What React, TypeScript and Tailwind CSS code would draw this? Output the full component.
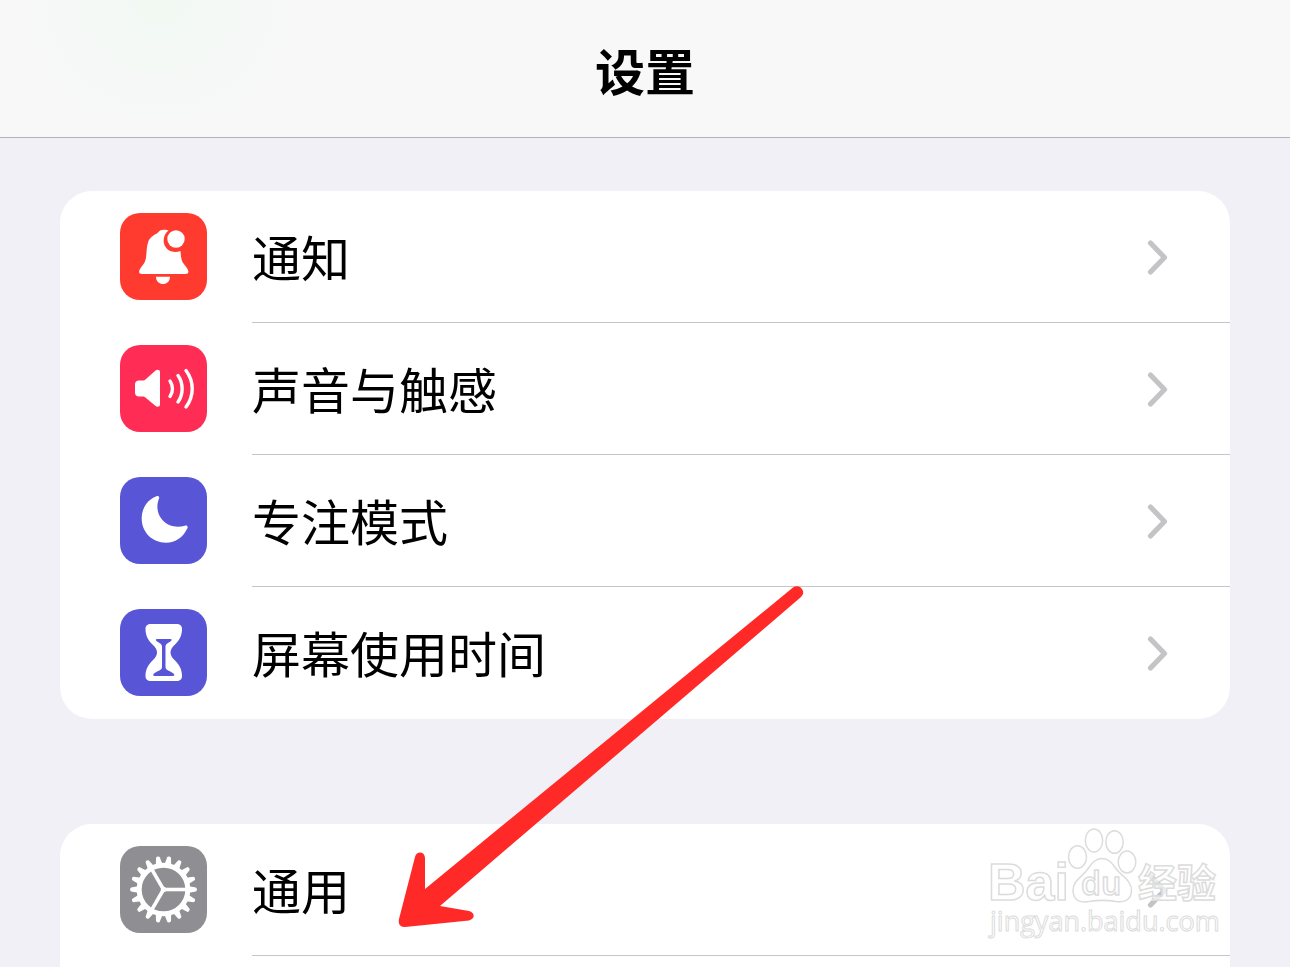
import type { ReactNode } from "react";

interface SettingsItem {
  id: string;
  label: string;
  tile: string;
  icon: ReactNode;
}

const GEAR_TEETH = Array.from({ length: 18 }, (_, i) => i * 20);

function BellIcon() {
  return (
    <svg viewBox="0 0 87 87" className="size-full" aria-hidden="true">
      <path
        fill="#fff"
        d="M42 17C45 16.500 47 17 48.500 17.500C44 21 42.500 27 44.500 32C47 38 54 40.500 60.500 38C61 43 61 46 62.500 49C64 52 67 54 68 57C69 59.500 68 61 65.500 61H22C19.500 61 18.500 59.500 19.500 57C21 53.500 24.500 51 25.500 47C27 41 26 34 28.500 28C31 22.500 36 21.500 38 19.500C39.500 18 40 17.300 42 17Z"
      />
      <circle cx="56" cy="26" r="8.700" fill="#fff" />
      <path fill="#fff" d="M36 63.700H50C50 68 47 71 43 71C39 71 36 68 36 63.700Z" />
    </svg>
  );
}

function SpeakerIcon() {
  return (
    <svg viewBox="0 0 87 87" className="size-full" aria-hidden="true">
      <path
        fill="#fff"
        d="M19 35.500H22.500C24 35.500 25 35 26 34L35 26C37 24.200 40 24.500 40 27V59.500C40 62 37 62.500 35 60.500L26 53C25 52 24 51.500 22.500 51.500H19C16.500 51.500 15 50 15 47.500V39.500C15 37 16.500 35.500 19 35.500Z"
      />
      <g fill="none" stroke="#fff" strokeWidth="3.400" strokeLinecap="round">
        <path d="M50 36C53.300 40.500 53.300 47 50 51.500" />
        <path d="M58 30.500C63.500 38 63.500 49.500 58 57" />
        <path d="M66 25.500C74.300 36.500 74.300 51 66 62" />
      </g>
    </svg>
  );
}

function MoonIcon() {
  return (
    <svg viewBox="0 0 87 87" className="size-full" aria-hidden="true">
      <path
        fill="#fff"
        d="M36.500 19.200C38.300 18.500 39.700 19.800 39 21.500C36.500 27.500 36.500 36 42 42.500C48 49.500 56.500 51 65 48.700C67 48.200 68.200 49.500 67.400 51.300C63.500 60 55.500 65.700 46 65.700C32 65.700 21.700 55 21.700 41.500C21.700 31 27.500 22.500 36.500 19.200Z"
      />
    </svg>
  );
}

function HourglassIcon() {
  return (
    <svg viewBox="0 0 87 87" className="size-full" aria-hidden="true">
      <path
        fill="#fff"
        d="M31 15H56.500C60 15 62 16.800 62 20C62 27 59 31.500 55 35.500C52 38.500 50.500 40.500 50.500 43.500C50.500 46.500 52 48.500 55 51.500C59 55.500 62 60 62 67C62 70.200 60 72 56.500 72H31C27.500 72 25.500 70.200 25.500 67C25.500 60 28.500 55.500 32.500 51.500C35.500 48.500 37 46.500 37 43.500C37 40.500 35.500 38.500 32.500 35.500C28.500 31.500 25.500 27 25.500 20C25.500 16.800 27.500 15 31 15Z"
      />
      <path
        fill="#5856d6"
        d="M37 30H50.500C51.700 30 52 31 51.200 31.800C49.500 33.700 45.500 34.500 45.500 37.500V58C45.500 61.500 51 62 53.500 64.500C54.800 66 54.500 67 53 67H34.500C33 67 32.700 66 34 64.500C36.500 62 42 61.500 42 58V37.500C42 34.500 38 33.700 36.300 31.800C35.500 31 35.800 30 37 30Z"
      />
    </svg>
  );
}

function GearIcon() {
  return (
    <svg viewBox="0 0 87 87" className="size-full" aria-hidden="true">
      <g transform="translate(43.500 43.500)">
        {GEAR_TEETH.map((angle) => (
          <path
            key={angle}
            fill="#fff"
            transform={`rotate(${angle})`}
            d="M25.500 -3.300L32.400 -1.900Q33.400 -1.600 33.400 0Q33.400 1.600 32.400 1.900L25.500 3.300Z"
          />
        ))}
        <circle r="24.300" fill="none" stroke="#fff" strokeWidth="5" />
        {[0, 120, 240].map((angle) => (
          <path
            key={angle}
            stroke="#fff"
            strokeWidth="3.600"
            transform={`rotate(${angle})`}
            d="M0 0H23"
          />
        ))}
        <circle r="2.700" fill="#fff" />
      </g>
    </svg>
  );
}

const ALERT_ITEMS: SettingsItem[] = [
  { id: "notifications", label: "通知", tile: "bg-[#ff3b30]", icon: <BellIcon /> },
  { id: "sounds", label: "声音与触感", tile: "bg-[#ff2d55]", icon: <SpeakerIcon /> },
  { id: "focus", label: "专注模式", tile: "bg-[#5856d6]", icon: <MoonIcon /> },
  { id: "screen-time", label: "屏幕使用时间", tile: "bg-[#5856d6]", icon: <HourglassIcon /> },
];

const SYSTEM_ITEMS: SettingsItem[] = [
  { id: "general", label: "通用", tile: "bg-[#8e8e93]", icon: <GearIcon /> },
];

function SettingsRow({ item, divider }: { item: SettingsItem; divider: boolean }) {
  return (
    <li>
      <a href={`#${item.id}`} className="flex items-start gap-[45px] pl-[60px]">
        <span className={`mt-[22px] size-[87px] shrink-0 rounded-[20px] ${item.tile}`}>
          {item.icon}
        </span>
        <span
          className={`flex h-[132px] min-w-0 flex-1 items-center justify-between border-b pr-[60px] ${
            divider ? "border-[#c6c6c8]" : "border-transparent"
          }`}
        >
          <span className="whitespace-nowrap pb-[2px] text-[49px] leading-[64px]">
            {item.label}
          </span>
          <svg viewBox="0 0 24 36" className="h-9 w-6 shrink-0" aria-hidden="true">
            <path
              d="M4.500 4L18.500 18.500L4.500 33"
              fill="none"
              stroke="#c4c4c6"
              strokeWidth="5.200"
              strokeLinecap="round"
              strokeLinejoin="round"
            />
          </svg>
        </span>
      </a>
    </li>
  );
}

function PointerArrow() {
  return (
    <svg
      viewBox="0 0 410 346"
      className="pointer-events-none absolute left-[396px] top-[584px] h-[346px] w-[410px]"
      aria-hidden="true"
    >
      <path
        fill="#ff2a27"
        d="M397 3.500C401 0.500 406 3 407 7C407.500 9.500 407 11 405 13L44 322L73 327C79 328.500 79.500 335 73 336.500L9 343C4 343.500 2 340 3 335L19 273C20.500 267 28.500 267 29 274L29 305Z"
      />
    </svg>
  );
}

function Watermark() {
  return (
    <svg
      viewBox="0 0 240 120"
      className="pointer-events-none absolute right-[64px] top-[824px] h-[120px] w-[240px]"
      aria-hidden="true"
    >
      <g
        fill="#fff"
        fillOpacity="0.7"
        stroke="#dcdcdc"
        strokeWidth="1.500"
        className="font-['Open_Sans','Noto_Sans_CJK_SC',sans-serif]"
      >
        <text x="2" y="76" fontSize="52" fontWeight="700" className="font-['Liberation_Sans',sans-serif]">
          Bai
        </text>
        <ellipse cx="91.500" cy="33" rx="9" ry="11.300" />
        <ellipse cx="108" cy="16.500" rx="8.700" ry="11.500" />
        <ellipse cx="128.500" cy="18" rx="8.700" ry="11.300" />
        <ellipse cx="141" cy="38" rx="8.800" ry="11" />
        <path d="M116 34.500C124 34.500 127 41 131 46C136 52 146 57 145.500 67C145 77 137 78.500 130 77.500C121 76 112 76 103 77.500C95 79 87.500 77 87 67C86.500 57 96 53 101 46C105 41 108 34.500 116 34.500Z" />
        <text x="95" y="71" fontSize="32" fontWeight="600">
          du
        </text>
        <text x="152" y="73" fontSize="39" fontWeight="700" className="font-['Noto_Sans_CJK_SC',sans-serif]">
          经验
        </text>
        <text x="4" y="107" fontSize="27" strokeWidth="1">
          jingyan.baidu.com
        </text>
      </g>
    </svg>
  );
}

export default function App() {
  return (
    <div
      lang="zh-CN"
      className="relative flex min-h-screen flex-col overflow-hidden bg-[#f0f0f6] font-['Noto_Sans_CJK_SC',sans-serif] text-black"
    >
      <header className="flex h-[138px] items-center justify-center border-b border-[#b2b2b7] bg-[#f8f8f9] bg-[radial-gradient(ellipse_140px_130px_at_160px_0px,#f1f9f2,transparent)]">
        <h1 className="text-[50px] font-bold leading-[72px]">设置</h1>
      </header>

      <main className="flex flex-1 flex-col gap-[105px] px-[60px] pt-[53px]">
        <ul className="rounded-[32px] bg-white">
          {ALERT_ITEMS.map((item, i) => (
            <SettingsRow key={item.id} item={item} divider={i < ALERT_ITEMS.length - 1} />
          ))}
        </ul>
        <ul className="flex-1 rounded-t-[32px] bg-white">
          {SYSTEM_ITEMS.map((item) => (
            <SettingsRow key={item.id} item={item} divider />
          ))}
        </ul>
      </main>

      <PointerArrow />
      <Watermark />
    </div>
  );
}
